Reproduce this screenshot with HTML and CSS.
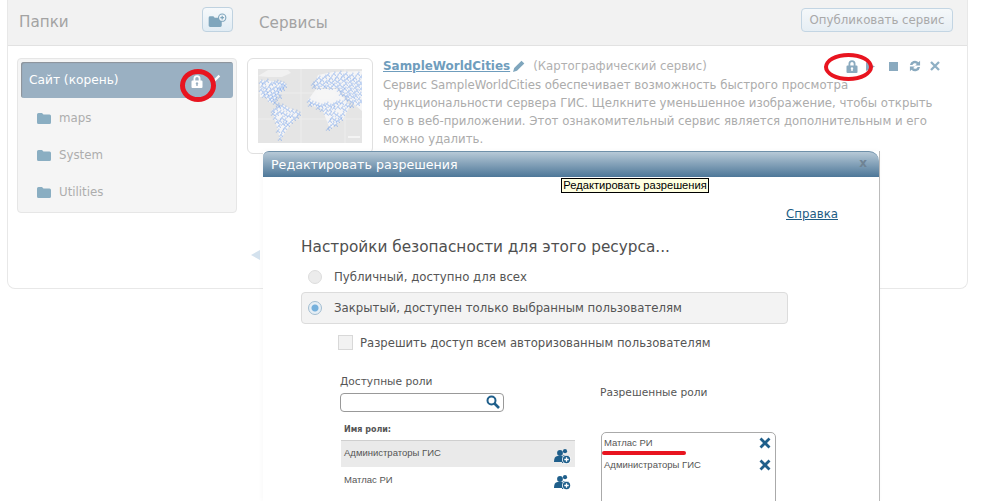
FILE: index.html
```html
<!DOCTYPE html>
<html lang="ru">
<head>
<meta charset="utf-8">
<title>Сервисы</title>
<link rel="stylesheet" href="styles.css">
</head>
<body>
<svg class="defs" width="0" height="0" aria-hidden="true">
  <defs>
    <symbol id="folder" viewBox="0 0 14 12"><path d="M0 2.500Q0 1 1.500 1H5L6.500 2.500H12.500Q14 2.500 14 4V10.500Q14 12 12.500 12H1.500Q0 12 0 10.500Z"/></symbol>
    <symbol id="lock" viewBox="0 0 12 13"><path fill-rule="evenodd" d="M2.500 5.500V3.800a3.500 3.500 0 0 1 7 0V5.500h1a1 1 0 0 1 1 1V12a1 1 0 0 1-1 1h-9a1 1 0 0 1-1-1V6.500a1 1 0 0 1 1-1zM4.300 5.500h3.400V3.800a1.700 1.700 0 0 0-3.400 0zM6 7.300a1.200 1.200 0 0 0-.7 2.200V11h1.400V9.500A1.200 1.200 0 0 0 6 7.300z"/></symbol>
    <symbol id="roleadd" viewBox="0 0 17 15"><circle cx="11" cy="2.200" r="2.100" fill="#1f5f8b"/><path d="M8 14V9Q8 6 11 6H13Q15 6 15 8V14Z" fill="#1f5f8b"/><circle cx="6" cy="4" r="2.900" fill="#1f5f8b"/><path d="M0 13Q0 7 3.500 7H8Q10 8 10 13Z" fill="#1f5f8b"/><circle cx="12.500" cy="10.500" r="4.500" fill="#fff"/><circle cx="12.500" cy="10.500" r="3.700" fill="#1f5f8b"/><path d="M12.500 8.300v4.400M10.300 10.500h4.400" stroke="#fff" stroke-width="1.300"/></symbol>
    <symbol id="cross" viewBox="0 0 12 12"><path d="M1.500 1.500L10.500 10.500M10.500 1.500L1.500 10.500" stroke="#1f5f8b" stroke-width="2.800" fill="none"/></symbol>
  </defs>
</svg>

<div class="app">
  <header class="top">
    <div class="top-left">
      <h1 class="top-title">Папки</h1>
      <button class="add-folder" type="button" aria-label="Добавить папку">
        <svg width="20" height="14" viewBox="0 0 20 15"><path d="M0 5Q0 3.500 1.500 3.500H5L6.500 5H12.500Q14 5 14 6.500V13.500Q14 15 12.500 15H1.500Q0 15 0 13.500Z" fill="#7fa6bd"/><circle cx="14.500" cy="5" r="4.500" fill="#7fa6bd"/><circle cx="14.500" cy="5" r="3.300" fill="#f0f5f9"/><path d="M14.500 3v4M12.500 5h4" stroke="#7fa6bd" stroke-width="1.300"/></svg>
      </button>
    </div>
    <div class="top-right">
      <h1 class="top-title">Сервисы</h1>
      <button class="publish" type="button">Опубликовать сервис</button>
    </div>
  </header>
  <div class="content">
    <nav class="folders">
      <div class="folder folder-root">
        <span>Сайт (корень)</span>
        <svg class="root-lock" width="12" height="13"><use href="#lock"/></svg>
        <svg class="root-pen" width="8" height="8" viewBox="0 0 10 10"><path d="M0 10L1 7L7 1L9 3L3 9Z" fill="#fff"/></svg>
      </div>
      <div class="folder"><svg class="folder-icon"><use href="#folder"/></svg>maps</div>
      <div class="folder"><svg class="folder-icon"><use href="#folder"/></svg>System</div>
      <div class="folder"><svg class="folder-icon"><use href="#folder"/></svg>Utilities</div>
    </nav>
    <section class="service">
      <div class="thumb">
        <svg width="104" height="74" viewBox="0 0 104 74">
          <rect width="104" height="74" fill="#e5e5e5"/>
          <path d="M0 24H104M0 50H104M43 0V74M87 0V74" stroke="#f1f1f1" stroke-width=".7"/>
          <path d="M0 7L10 1H30L33 4L24 8L10 8Z" fill="#f1f1f1"/>
          <path d="M2 11L25 13L29 16L20 26L15 34L11 33L8 28L2 28ZM14 41L25 36L42 44L32 56L22 71L19 58ZM50 31L58 20L79 20L92 37L85 50L72 60L64 40L52 36ZM56 16L60 6L75 3L104 2V42L92 32L80 19L60 19Z" fill="#f5f5f6"/>
          <path id="cities" class="cities" d="M3 13h0M6 14h0M9 12h0M4 17h0M7 19h0M3 21h0M5 24h0M8 22h0M11 18h0M13 15h0M16 14h0M19 13h0M22 14h0M25 15h0M27 17h0M24 18h0M21 19h0M18 18h0M15 20h0M12 22h0M9 25h0M6 27h0M10 28h0M13 26h0M16 24h0M19 22h0M22 21h0M25 20h0M20 25h0M17 27h0M14 29h0M12 31h0M15 32h0M17 34h0M20 36h0M18 30h0M22 28h0M15 42h0M18 40h0M21 38h0M24 37h0M27 39h0M30 41h0M34 42h0M38 43h0M41 45h0M39 48h0M36 50h0M33 53h0M30 56h0M27 59h0M25 62h0M23 66h0M22 70h0M20 62h0M21 57h0M19 53h0M17 49h0M15 45h0M19 45h0M22 43h0M25 44h0M28 46h0M31 47h0M34 47h0M24 49h0M27 51h0M22 52h0M25 55h0M28 54h0M51 32h0M54 34h0M57 35h0M60 36h0M63 37h0M66 36h0M69 35h0M72 37h0M75 36h0M78 34h0M81 33h0M84 34h0M88 36h0M91 37h0M52 36h0M60 39h0M64 41h0M68 40h0M72 41h0M76 39h0M80 38h0M84 39h0M87 41h0M85 45h0M82 48h0M79 46h0M76 44h0M72 45h0M74 49h0M77 51h0M80 52h0M83 50h0M72 52h0M75 55h0M72 58h0M70 60h0M78 56h0M68 44h0M55 15h0M58 12h0M61 9h0M64 11h0M67 8h0M70 6h0M73 9h0M76 5h0M79 8h0M82 4h0M85 7h0M88 5h0M91 8h0M94 6h0M97 9h0M100 5h0M103 8h0M56 18h0M59 16h0M62 14h0M65 16h0M68 13h0M71 12h0M74 14h0M77 11h0M80 13h0M83 10h0M86 12h0M89 10h0M92 13h0M95 11h0M98 14h0M101 12h0M103 15h0M61 19h0M67 18h0M70 17h0M73 19h0M76 16h0M79 18h0M82 16h0M85 18h0M88 15h0M91 18h0M94 16h0M97 19h0M100 17h0M103 20h0M81 21h0M84 22h0M87 20h0M90 23h0M93 21h0M96 24h0M99 22h0M102 25h0M83 25h0M86 26h0M89 27h0M92 26h0M95 28h0M98 27h0M101 30h0M103 33h0M88 30h0M91 31h0M94 33h0M97 32h0M100 35h0M94 37h0"/>
          <use class="cities-soft" href="#cities" transform="translate(1.400 1.300)"/>
          <use class="cities-soft" href="#cities" transform="translate(-1.600 1.100)"/>
          <use class="cities-soft" href="#cities" transform="translate(.9 -1.700)"/>
          <path d="M58 22L62 21L76 22L78 26L74 30L60 30Z" fill="#f6f6f6"/>
          <path d="M90 68H102" stroke="#f8f8f8" stroke-width="1.500"/>
        </svg>
      </div>
      <div class="info">
        <div class="info-head">
          <a class="service-name">SampleWorldCities</a>
          <svg class="name-pen" width="12" height="12" viewBox="0 0 12 12"><path d="M0 12L1.200 8L8.500 .7L11.300 3.500L4 10.800Z" fill="#7fa6bd"/></svg>
          <span class="service-type">(Картографический сервис)</span>
          <div class="actions">
            <svg class="act-lock" width="12" height="13"><use href="#lock"/></svg>
            <svg class="act-play" width="9" height="9"><path d="M0 0L9 4.500L0 9Z"/></svg>
            <svg class="act-stop" width="9" height="9"><rect width="9" height="9"/></svg>
            <svg class="act-refresh" width="12" height="12" viewBox="0 0 13 13"><path d="M1 5.500A5.500 5.500 0 0 1 10.300 2.400L12 .7V6H6.700L8.500 4.200A3 3 0 0 0 3.700 5.500ZM12 7.500A5.500 5.500 0 0 1 2.700 10.600L1 12.300V7H6.300L4.500 8.800A3 3 0 0 0 9.300 7.500Z"/></svg>
            <svg class="act-close" width="10" height="10" viewBox="0 0 10 10"><path d="M1 1L9 9M9 1L1 9" stroke="#8fb0c4" stroke-width="2.300"/></svg>
          </div>
        </div>
        <p class="desc">Сервис SampleWorldCities обеспечивает возможность быстрого просмотра функциональности сервера ГИС. Щелкните уменьшенное изображение, чтобы открыть его в веб-приложении. Этот ознакомительный сервис является дополнительным и его можно удалить.</p>
      </div>
    </section>
  </div>
</div>
<div class="pager-arrow"></div>

<div class="modal">
  <div class="modal-title"><span>Редактировать разрешения</span><span class="modal-close">x</span></div>
  <div class="modal-body">
    <div class="help-row"><a class="help">Справка</a></div>
    <h2 class="modal-heading">Настройки безопасности для этого ресурса...</h2>
    <label class="option"><span class="radio"></span>Публичный, доступно для всех</label>
    <label class="option option-on"><span class="radio radio-on"></span>Закрытый, доступен только выбранным пользователям</label>
    <label class="check-row"><span class="check"></span>Разрешить доступ всем авторизованным пользователям</label>
    <div class="roles">
      <div class="avail">
        <div class="roles-label">Доступные роли</div>
        <div class="search">
          <svg width="14" height="14" viewBox="0 0 14 14"><circle cx="5.500" cy="5.500" r="4" fill="none" stroke="#1f5f8b" stroke-width="2"/><path d="M8.500 8.500L13 13" stroke="#1f5f8b" stroke-width="2.600"/></svg>
        </div>
        <div class="role-head">Имя роли:</div>
        <div class="role-row role-row-on"><span>Администраторы ГИС</span><svg class="role-add"><use href="#roleadd"/></svg></div>
        <div class="role-row"><span>Матлас РИ</span><svg class="role-add"><use href="#roleadd"/></svg></div>
      </div>
      <div class="allowed">
        <div class="roles-label">Разрешенные роли</div>
        <div class="allowed-box">
          <div class="allowed-row"><span>Матлас РИ</span><svg class="cross"><use href="#cross"/></svg></div>
          <div class="allowed-row"><span>Администраторы ГИС</span><svg class="cross"><use href="#cross"/></svg></div>
        </div>
      </div>
    </div>
  </div>
</div>

<div class="tooltip">Редактировать разрешения</div>
<div class="mark mark-root"></div>
<div class="mark mark-act"></div>
<div class="mark-line"></div>
</body>
</html>
```
FILE: styles.css
```css
* { box-sizing: border-box; }
html, body { margin: 0; height: 501px; overflow: hidden; background: #fff; }
body { position: relative; font-family: "DejaVu Sans", sans-serif; }
.defs { position: absolute; }

.app { width: 961px; height: 289px; margin-left: 7px; border: 1px solid #e8e8e8; border-top: 0; border-radius: 0 0 8px 8px; }
.top { display: flex; height: 46px; background: #f2f2f2; border-bottom: 1px solid #e2e2e2; }
.top-left { width: 225px; padding: 7px 0 0 11px; margin-right: 26px; display: flex; justify-content: space-between; align-items: flex-start; }
.top-right { flex: 1; padding: 8px 14px 0 0; display: flex; justify-content: space-between; align-items: flex-start; }
.top-title { margin: -1px 0 0; font-size: 15.200px; font-weight: 400; line-height: 32px; color: #a3a3a3; }
.add-folder { width: 31px; height: 25px; padding: 3px 0 0; border: 1px solid #bfd2e0; border-radius: 4px; background: linear-gradient(#f6f9fb, #e1ecf4); }
.publish { width: 152px; height: 24px; padding: 0; border: 1px solid #c3d5e3; border-radius: 4px; background: linear-gradient(#f5f8fa, #e6eef4); font: 11.800px "DejaVu Sans", sans-serif; color: #a9a9a9; }

.content { display: flex; align-items: flex-start; padding: 12px 0 0 9px; }
.folders { width: 220px; height: 155px; margin-right: 10px; padding: 3px; background: #f5f5f5; border: 1px solid #e6e6e6; border-radius: 4px; }
.folder { display: flex; align-items: center; height: 37px; padding-left: 16px; font-size: 11.800px; color: #adadad; }
.folder-root { height: 36px; margin-bottom: 1px; padding: 0 0 1px 8px; background: #9ab0c2; border-radius: 3px; box-shadow: inset 1px 1px 1px #8d9399; font-size: 12.200px; color: #fff; }
.folder-icon { width: 14px; height: 12px; margin-right: 8px; fill: #8aaec2; }
.root-lock { margin: 3px 0 0 72px; fill: #fff; }
.root-pen { margin: -4px 0 0 10px; }

.service { flex: 1; display: flex; align-items: flex-start; }
.thumb { width: 126px; height: 96px; padding: 10px; background: #fff; border: 1px solid #e0e0e0; border-radius: 6px; margin-right: 10px; }
.thumb svg { display: block; }
.cities { fill: none; stroke: #6d9eeb; stroke-width: 1.400; stroke-linecap: round; }
.cities-soft { opacity: .5; }
.info { width: 557px; color: #acacac; font-size: 11.750px; }
.info-head { display: flex; align-items: center; height: 16px; margin-bottom: 2px; }
.service-name { font-weight: 700; font-size: 11.950px; color: #6f9dbd; text-decoration: underline; }
.name-pen { margin: 0 8px 0 3px; }
.service-type { color: #b0b0b0; }
.actions { margin-left: auto; display: flex; align-items: center; fill: #8aaabf; }
.act-play { margin-left: 8px; }
.act-stop { margin-left: 14px; }
.act-refresh { margin-left: 11px; }
.act-close { margin-left: 9px; }
.desc { margin: 0; width: 555px; line-height: 18px; }
.pager-arrow { position: absolute; left: 251px; top: 250px; border: 5px solid transparent; border-left-width: 0; border-right: 9px solid #d4e2ee; }

.modal { position: absolute; left: 263px; top: 151px; width: 617px; height: 350px; background: #fff; border-right: 1px solid #bbb; box-shadow: -1px 0 5px rgba(0,0,0,.03); overflow: hidden; }
.modal-title { display: flex; justify-content: space-between; height: 26px; padding: 5px 12px 0 8px; background: linear-gradient(#b7c9d7, #4d7798); border-top: 1px solid #6f90a9; border-radius: 6px 10px 0 0; font-size: 12.650px; color: #fff; }
.modal-close { font-weight: 700; font-size: 12px; line-height: 13px; color: #6f8394; }
.modal-body { padding: 30px 0 0 38px; color: #555; }
.help-row { display: flex; justify-content: flex-end; padding-right: 41px; height: 16px; }
.help { font-size: 11.800px; color: #1d5c84; text-decoration: underline; }
.modal-heading { margin: 13px 0 3px; font-size: 15.300px; font-weight: 400; line-height: 22px; color: #4f4f4f; }
.option { display: flex; align-items: center; width: 487px; height: 31px; padding-left: 7px; font-size: 11.750px; color: #555; }
.option-on { height: 32px; background: #f3f3f3; border: 1px solid #dcdcdc; border-radius: 4px; padding-left: 6px; }
.radio { width: 14px; height: 14px; margin-right: 12px; border-radius: 50%; background: #ececec; border: 1px solid #ddd; }
.radio-on { background: radial-gradient(circle, #75b0dc 0 3px, #e5eef5 4px); border-color: #a2bdd1; }
.check-row { display: flex; align-items: center; height: 17px; margin: 10px 0 0 37px; font-size: 11.650px; color: #555; }
.check { width: 15px; height: 15px; margin-right: 7px; background: #f2f2f2; border: 1px solid #d8d8d8; }
.roles { display: flex; align-items: flex-start; margin: 23px 0 0 39px; }
.avail { width: 235px; margin-right: 25px; }
.roles-label { font-size: 10.650px; line-height: 16px; color: #555; }
.search { width: 164px; height: 19px; margin-top: 3px; padding: 1px 3px 0 0; display: flex; justify-content: flex-end; border: 1px solid #999; border-radius: 4px; }
.role-head { margin: 10px 0 3px 4px; height: 15px; font-size: 8px; font-weight: 700; line-height: 16px; color: #555; }
.role-row { display: flex; justify-content: space-between; height: 27px; padding: 0 4px 0 3px; margin-left: 1px; font-family: "Liberation Sans", sans-serif; font-size: 9.500px; line-height: 25px; color: #555; }
.role-row-on { background: #eaeaea; border-top: 1px solid #cfcfcf; line-height: 23px; }
.role-add { width: 17px; height: 15px; margin-top: 8px; }
.allowed { width: 176px; padding-top: 11px; }
.allowed-box { height: 100px; margin: 31px 0 0 1px; padding: 0 4px 0 2px; border: 1px solid #aaa; border-radius: 5px; font-family: "Liberation Sans", sans-serif; font-size: 9.500px; color: #555; }
.allowed-row { display: flex; justify-content: space-between; align-items: flex-start; height: 22px; line-height: 20px; }
.cross { width: 12px; height: 12px; margin-top: 4px; }

.tooltip { position: absolute; left: 561px; top: 178px; width: 148px; height: 15px; background: #ffffe1; border: 1px solid #000; font: 11.150px/13px "Liberation Sans", sans-serif; color: #000; white-space: nowrap; text-align: center; }
.mark { position: absolute; border: 4px solid #e8141f; border-radius: 50%; }
.mark-root { left: 180px; top: 69px; width: 36px; height: 33px; border-width: 5px; }
.mark-act { left: 824px; top: 53px; width: 49px; height: 28px; }
.mark-line { position: absolute; left: 602px; top: 451px; width: 84px; height: 4px; border-radius: 2px; background: #e8141f; }
```
